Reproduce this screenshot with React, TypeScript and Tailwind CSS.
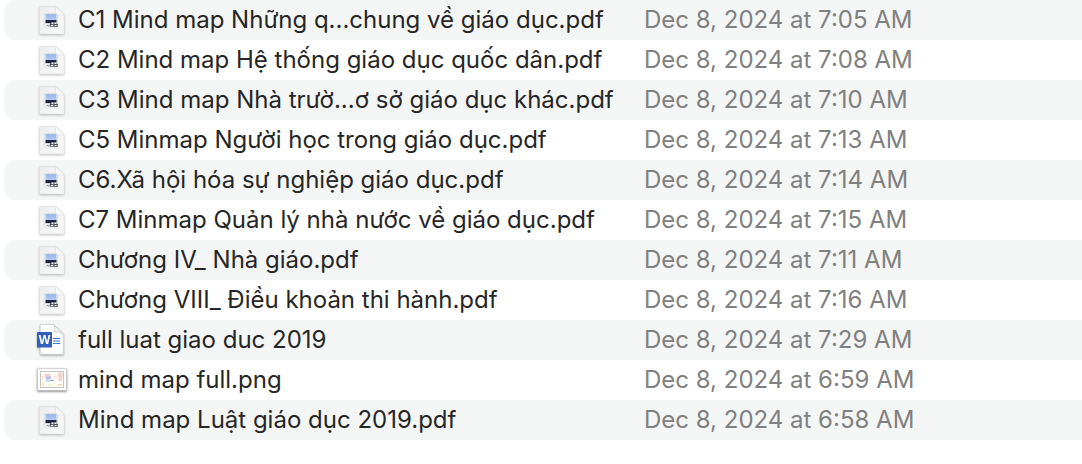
import React from 'react';
import clsx from 'clsx';

type FileKind = 'pdf' | 'word' | 'image';

interface FileEntry {
  name: string;
  modified: string;
  kind: FileKind;
}

const files: FileEntry[] = [
  { name: 'C1 Mind map Những q...chung về giáo dục.pdf', modified: 'Dec 8, 2024 at 7:05 AM', kind: 'pdf' },
  { name: 'C2 Mind map Hệ thống giáo dục quốc dân.pdf', modified: 'Dec 8, 2024 at 7:08 AM', kind: 'pdf' },
  { name: 'C3 Mind map Nhà trườ...ơ sở giáo dục khác.pdf', modified: 'Dec 8, 2024 at 7:10 AM', kind: 'pdf' },
  { name: 'C5 Minmap Người học trong giáo dục.pdf', modified: 'Dec 8, 2024 at 7:13 AM', kind: 'pdf' },
  { name: 'C6.Xã hội hóa sự nghiệp giáo dục.pdf', modified: 'Dec 8, 2024 at 7:14 AM', kind: 'pdf' },
  { name: 'C7 Minmap Quản lý nhà nước về giáo dục.pdf', modified: 'Dec 8, 2024 at 7:15 AM', kind: 'pdf' },
  { name: 'Chương IV_ Nhà giáo.pdf', modified: 'Dec 8, 2024 at 7:11 AM', kind: 'pdf' },
  { name: 'Chương VIII_ Điều khoản thi hành.pdf', modified: 'Dec 8, 2024 at 7:16 AM', kind: 'pdf' },
  { name: 'full luat giao duc 2019', modified: 'Dec 8, 2024 at 7:29 AM', kind: 'word' },
  { name: 'mind map full.png', modified: 'Dec 8, 2024 at 6:59 AM', kind: 'image' },
  { name: 'Mind map Luật giáo dục 2019.pdf', modified: 'Dec 8, 2024 at 6:58 AM', kind: 'pdf' }
];

function PdfIcon() {
  return <svg width="32" height="32" viewBox="0 0 32 32" className="drop-shadow-[0_1px_1px_rgba(0,0,0,0.25)]" aria-hidden="true">
      <defs>
        <linearGradient id="page" x1="0" y1="0" x2="1" y2="1">
          <stop offset="0" stopColor="#ececec" />
          <stop offset="1" stopColor="#fafafa" />
        </linearGradient>
        <linearGradient id="sky" x1="0" y1="0" x2="0" y2="1">
          <stop offset="0" stopColor="#8fb0ea" />
          <stop offset="1" stopColor="#b9cef4" />
        </linearGradient>
      </defs>
      <path d="M4.500 2.500H19.500l8.500 8.500V29a1 1 0 0 1-1 1H4.500a1 1 0 0 1-1-1V3.500a1 1 0 0 1 1-1z" fill="url(#page)" stroke="#dcdcdc" strokeWidth=".5" />
      <path d="M19.500 2.500V9.500a1.500 1.500 0 0 0 1.500 1.500h7z" fill="#fff" stroke="#d6d6d6" strokeWidth=".6" />
      <rect x="8" y="9.500" width="13.500" height="13.500" rx="1.500" fill="#f4f4f4" stroke="#d0d0d0" strokeWidth=".6" />
      <path d="M9.500 10.200h11v6h-11z" fill="url(#sky)" />
      <path d="M9.500 16h11v2.200h-4l-1 1.500-6-.5z" fill="#1b2342" />
      <path d="M10 19.200h5v3h-5z" fill="#e3e6e8" />
      <path d="M11 21l1.500 1.200 1.500-1.400" fill="none" stroke="#6d747c" strokeWidth=".8" />
      <path d="M14 19.500l1.500-1.500h4.500l1.800 2.500v2.300H14z" fill="#4a4f57" />
      <path d="M15.500 18.600h2v1.600h-2zM18.500 18.400h1.500l.8 1.600h-2.300z" fill="#f3f5f6" />
      <path d="M14.800 21h2.400v1.200h-2.400zM18.500 20.900h2.200v1.200h-2.200z" fill="#e4e7e9" />
    </svg>;
}

function WordIcon() {
  return <svg width="32" height="32" viewBox="0 0 32 32" className="drop-shadow-[0_1px_1px_rgba(0,0,0,0.35)]" aria-hidden="true">
      <path d="M5 .500h12.500l9.800 9.500V29.500a.7.7 0 0 1-.7.7H5a.7.7 0 0 1-.7-.7V1.200A.7.7 0 0 1 5 .500z" fill="#fff" stroke="#cfcfcf" strokeWidth=".7" />
      <path d="M17.500.500c1.500 2 1.500 4 1 7.500 3-.8 6 0 8.800 2z" fill="#f7f7f7" stroke="#c4c4c4" strokeWidth=".8" />
      <path d="M17 14.500h7.300M17 17h7.300M17 19.500h7.300" stroke="#3a7bd5" strokeWidth="1.1" />
      <rect x="1" y="8" width="15" height="15.500" rx=".8" fill="#315fbd" />
      <text x="8.500" y="20" textAnchor="middle" fontSize="12" fontWeight="700" fill="#fff" fontFamily="Open Sans, sans-serif">W</text>
    </svg>;
}

function ImageIcon() {
  return <svg width="32" height="32" viewBox="0 0 32 32" className="drop-shadow-[0_1px_1px_rgba(0,0,0,0.5)]" aria-hidden="true">
      <rect x="1.500" y="4.800" width="29" height="21.500" fill="#fff" stroke="#c4c4c4" strokeWidth=".6" />
      <rect x="4.500" y="7.500" width="23" height="16" fill="#fffdfa" stroke="#c0c0c0" strokeWidth=".9" />
      <path d="M8.500 10h6v3.500h-6z" fill="#f6c3c8" opacity=".8" />
      <path d="M10 12.500h5v2.500h-5z" fill="#b7aee3" opacity=".8" />
      <path d="M9.500 15h5v3h-5z" fill="#bcd9f3" opacity=".8" />
      <path d="M14.500 16h3v1h-3z" fill="#8b8f9a" />
      <path d="M22 8.500h4.500v5H26V17h-3.500v-4H22z" fill="#f6d2ce" />
      <path d="M18.500 11.500h2v3h-2z" fill="#fae1dc" />
      <path d="M6 12h1.500v4H6z" fill="#fbe5cc" />
      <path d="M6 19h2v3.500H6z" fill="#f5e6b4" />
      <path d="M11.500 20.500h5.500v1h-5.500z" fill="#e2ecc8" />
      <path d="M21.500 20h4.500v1.500h-4.500z" fill="#f5dfb8" />
    </svg>;
}

const icons = {
  pdf: PdfIcon,
  word: WordIcon,
  image: ImageIcon
};

function FileRow({ file, shaded }: { file: FileEntry; shaded: boolean }) {
  const Icon = icons[file.kind];
  return <tr className="h-10">
      <td className={clsx('rounded-l-xl p-0 pl-8', shaded && 'bg-[#f4f5f5]')}>
        <div className="flex items-center gap-2.5">
          <span className="w-8 shrink-0">
            <Icon />
          </span>
          <span className="truncate text-[#262626]">{file.name}</span>
        </div>
      </td>
      <td className={clsx('truncate p-0 text-[#808080]', shaded && 'bg-[#f4f5f5]')}>
        {file.modified}
      </td>
    </tr>;
}

export default function App() {
  return <main className="min-h-screen bg-white pl-1 font-['Inter',sans-serif] text-[24px] leading-10">
      <table className="w-full table-fixed border-separate border-spacing-0" aria-label="Files">
        <colgroup>
          <col className="w-[640px]" />
          <col />
        </colgroup>
        <tbody>
          {files.map((file, index) => <FileRow key={file.name} file={file} shaded={index % 2 === 0} />)}
        </tbody>
      </table>
    </main>;
}
